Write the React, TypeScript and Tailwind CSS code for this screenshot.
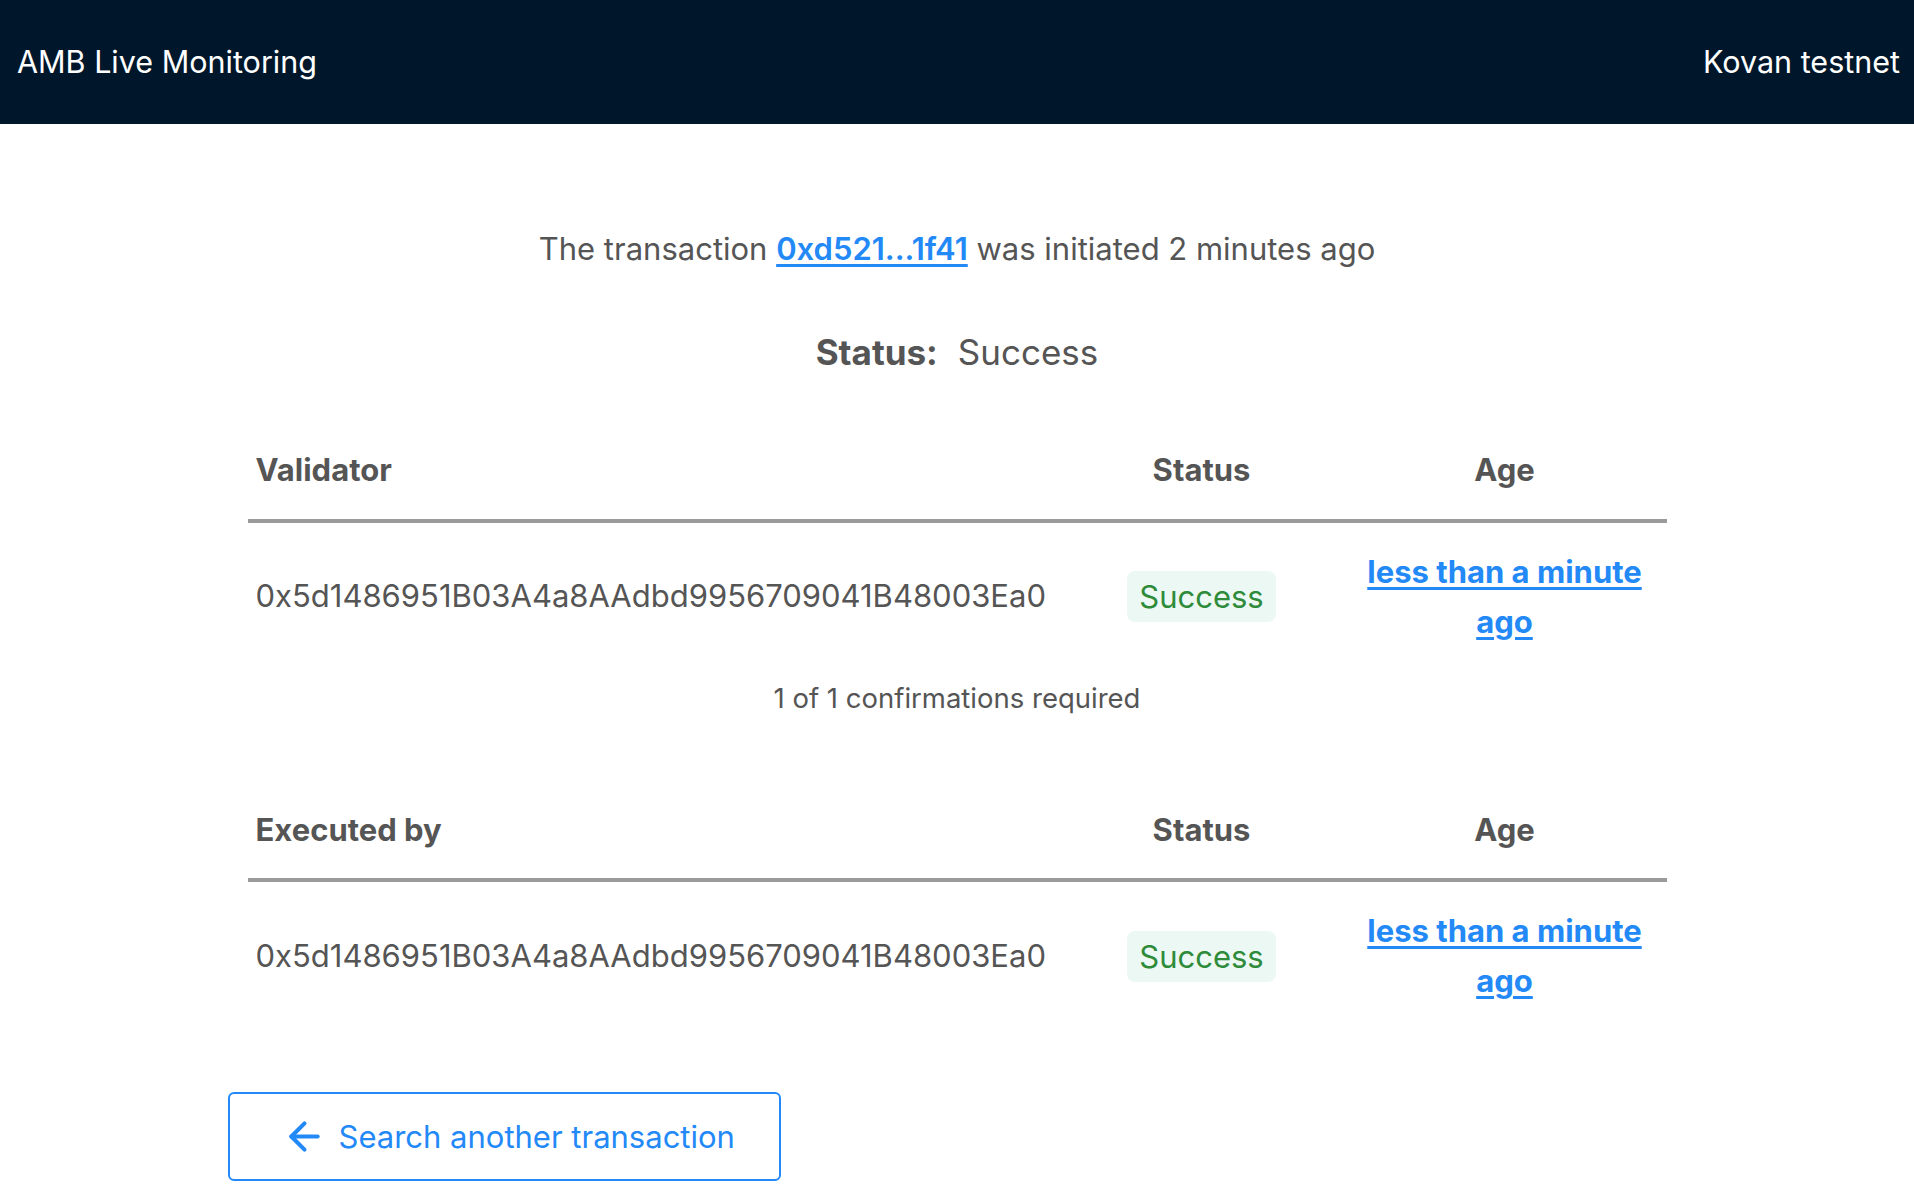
import { ArrowLeft } from "lucide-react";

const ADDRESS = "0x5d1486951B03A4a8AAdbd9956709041B48003Ea0";

function ConfirmationTable({ title }: { title: string }) {
  return (
    <div>
      <div className="grid grid-cols-[813px_282px_324px] border-b-4 border-[#9a9a9a] pb-[25px] text-[31px] font-bold text-[#555]">
        <div className="pl-2">{title}</div>
        <div className="text-center">Status</div>
        <div className="text-center">Age</div>
      </div>
      <div className="grid grid-cols-[813px_282px_324px] items-center py-[24px] text-[31px] text-[#555]">
        <div className="pl-2">{ADDRESS}</div>
        <div className="flex justify-center">
          <span className="rounded-lg bg-[#ecf8f4] px-3 py-[6px] leading-[39px] text-[#2e8b3a]">Success</span>
        </div>
        <div className="px-2 text-center leading-[50px]">
          <a href="#" className="font-bold text-[#2389f7] underline underline-offset-4">
            less than a minute ago
          </a>
        </div>
      </div>
    </div>
  );
}

export default function App() {
  return (
    <div className="min-h-screen bg-white font-['Inter',sans-serif] text-[#555]">
      <header className="flex h-[124px] items-center justify-between bg-[#00172b] pl-[17px] pr-[14px] text-[30.5px] text-white">
        <span>AMB Live Monitoring</span>
        <span>Kovan testnet</span>
      </header>

      <main className="mx-auto w-[1419px] pt-[106px]">
        <p className="text-center text-[31px] leading-[38px]">
          The transaction{" "}
          <a href="#" className="font-semibold text-[#2389f7] underline underline-offset-4">
            0xd521...1f41
          </a>{" "}
          was initiated 2 minutes ago
        </p>
        <p className="mt-[64px] text-center text-[35px] leading-[40px]">
          <span className="font-bold">Status:</span>
          <span className="ml-5">Success</span>
        </p>

        <div className="mt-[75px]">
          <ConfirmationTable title="Validator" />
          <p className="mt-[7px] text-center text-[27.5px]">1 of 1 confirmations required</p>
        </div>

        <div className="mt-[88px]">
          <ConfirmationTable title="Executed by" />
        </div>

        <button className="mt-[62px] -ml-5 flex h-[89px] w-[553px] items-center gap-3 rounded-md border-2 border-[#2389f7] pl-[52px] text-[31px] text-[#2389f7]">
          <ArrowLeft size={45} strokeWidth={2.2} />
          Search another transaction
        </button>
      </main>
    </div>
  );
}
